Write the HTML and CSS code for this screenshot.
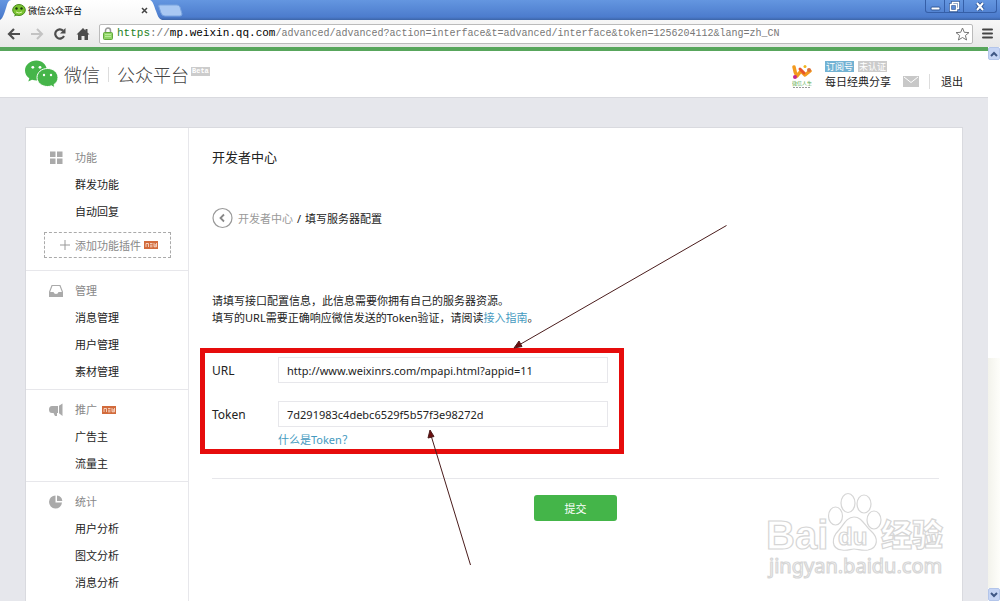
FILE: index.html
```html
<!DOCTYPE html>
<html lang="zh-CN">
<head>
<meta charset="utf-8">
<title>微信公众平台</title>
<link rel="stylesheet" href="styles.css">
</head>
<body>
<div class="tabbar">
  <svg class="tabshape" width="192" height="20" viewBox="0 0 192 20" aria-hidden="true">
    <defs><linearGradient id="tab" x1="0" y1="0" x2="0" y2="1"><stop offset="0" stop-color="#fff"/><stop offset="1" stop-color="#f7f7f7"/></linearGradient></defs>
    <path d="M0 20C3 18 4 14 6 8S8 1 11 0H150C153 1 154 6 156 11S158 18 162 20Z" fill="url(#tab)"/>
    <path d="M160 5H177Q179 5 180 7L182 14Q182 16 180 16H165Q162 16 161 13L159 7Q158 5 160 5Z" fill="#a9c8f3" stroke="#7ba4df"/>
  </svg>
  <div class="tab">
    <svg width="14" height="13" viewBox="0 0 14 13" aria-hidden="true"><path d="M3 10L2 12.500L6 11Z" fill="#4a9622"/><ellipse cx="7" cy="6" rx="6.300" ry="5.500" fill="#7bc331" stroke="#4b8d20"/><circle cx="4.500" cy="4.500" r="1.200" fill="#173c0b"/><circle cx="9.500" cy="4.500" r="1.200" fill="#173c0b"/><path d="M4 8Q7 10 10 8" fill="none" stroke="#dcf7aa"/></svg>
    <span class="tabtitle">微信公众平台</span>
    <button class="tabclose" aria-label="关闭标签"><svg width="7" height="7" viewBox="0 0 7 7"><path d="M1 1L6 6M6 1L1 6" stroke="#444" stroke-width="1.500"/></svg></button>
  </div>
  <div class="wincontrols">
    <button aria-label="最小化"><svg width="19" height="13" viewBox="0 0 19 13"><rect x="5" y="7" width="9" height="3" rx="1" fill="#fff" stroke="#315898"/></svg></button>
    <button aria-label="还原"><svg width="19" height="13" viewBox="0 0 19 13"><path d="M7.500 4V2.500H13.500V8.500H12M5.500 4.500H11.500V10.500H5.500Z" fill="none" stroke="#315898" stroke-width="3"/><path d="M7.500 4V2.500H13.500V8.500H12M5.500 4.500H11.500V10.500H5.500Z" fill="none" stroke="#fff" stroke-width="1.500"/></svg></button>
    <button class="winclose" aria-label="关闭"><svg width="19" height="13" viewBox="0 0 19 13"><path d="M6 3L12 10M12 3L6 10" stroke="#315898" stroke-width="4"/><path d="M6 3L12 10M12 3L6 10" stroke="#fff" stroke-width="2"/></svg></button>
  </div>
</div>
<div class="toolbar">
  <button aria-label="后退"><svg width="14" height="12" viewBox="0 0 14 12"><path d="M13 6H2M7 1L2 6L7 11" fill="none" stroke="#4d4d4d" stroke-width="2.200"/></svg></button>
  <button aria-label="前进"><svg width="14" height="12" viewBox="0 0 14 12"><path d="M1 6H12M7 1L12 6L7 11" fill="none" stroke="#c3c3c3" stroke-width="2"/></svg></button>
  <button aria-label="刷新"><svg width="14" height="12" viewBox="0 0 14 12"><path d="M11 8A4.600 4.600 0 1 1 10 2.600" fill="none" stroke="#4d4d4d" stroke-width="2.200"/><path d="M12.500 0V5.500H7Z" fill="#4d4d4d"/></svg></button>
  <button aria-label="主页"><svg width="14" height="12" viewBox="0 0 14 12"><path d="M7 0L0.500 6.500H2V12H5.500V8H8.500V12H12V6.500H13.500L11.500 4.500V1H9.500V2.500Z" fill="#4d4d4d"/></svg></button>
  <div class="address">
    <svg width="10" height="13" viewBox="0 0 10 13" aria-hidden="true"><path d="M2.500 6V3.500A2.500 2.500 0 0 1 7.500 3.500V6" fill="none" stroke="#999" stroke-width="1.500"/><rect x="0.500" y="5.500" width="9" height="7" rx="1" fill="#91d467" stroke="#62a93c"/><path d="M2 7.500H8M2 9.500H8" stroke="#b9ed98"/></svg>
    <span class="url"><span class="host"><span class="scheme">https</span><span class="sep">://</span>mp.weixin.qq.com</span>/advanced/advanced?action=interface&amp;t=advanced/interface&amp;token=1256204112&amp;lang=zh_CN</span>
    <button aria-label="收藏"><svg width="15" height="14" viewBox="0 0 15 14"><path d="M7.500 1L9.300 5.300L14 5.600L10.400 8.500L11.600 13L7.500 10.500L3.400 13L4.600 8.500L1 5.600L5.700 5.300Z" fill="#fff" stroke="#777"/></svg></button>
  </div>
  <button class="menubtn" aria-label="菜单"><svg width="11" height="11" viewBox="0 0 11 11"><path d="M1 1.500H10M1 5.500H10M1 9.500H10" stroke="#444" stroke-width="2" stroke-linecap="round"/></svg></button>
</div>
<div class="viewport">
  <div class="page">
    <header class="header">
      <svg width="33" height="28" viewBox="0 0 33 28" aria-hidden="true"><path d="M11.500 0.500C5 0.500 0 5 0 10.500C0 13.700 1.600 16.500 4.300 18.300L3.300 21.500L7 19.700Q9 20.400 12 20.400L22 10C21.400 4.500 17 0.500 11.500 0.500Z" fill="#45b549"/><path d="M22.500 8.500C16.500 8.500 12 12.500 12 17.500S16.500 26.500 22.500 26.500Q24.700 26.500 26.500 25.800L30 28L29 24.500C31.500 23 33 20.500 33 17.500C33 12.500 28.500 8.500 22.500 8.500Z" fill="#45b549" stroke="#fff"/><circle cx="7.800" cy="7.300" r="1.400" fill="#fff"/><circle cx="15" cy="7.300" r="1.400" fill="#fff"/><circle cx="19" cy="15" r="1.200" fill="#fff"/><circle cx="26" cy="15" r="1.200" fill="#fff"/></svg>
      <span class="brand">微信</span><span class="bar brandbar"></span><span class="brand">公众平台</span><span class="beta">Beta</span>
      <div class="account">
        <svg width="20" height="26" viewBox="0 0 20 26" aria-hidden="true"><path d="M2 3Q3 9 5 12L9 7L13 11L18 7" fill="none" stroke="#f39a1e" stroke-width="3.500" stroke-linecap="round" stroke-linejoin="round"/><path d="M8 5L12 9" stroke="#e8552b" stroke-width="3" stroke-linecap="round"/><circle cx="3" cy="13" r="2" fill="#c4278f"/><circle cx="13" cy="2.500" r="1.500" fill="#f0b51d"/><circle cx="17" cy="6" r="2" fill="#d9703c"/><text x="0" y="21" class="avatartext">微信人生</text><path d="M1 23.500H18" stroke="#999" stroke-dasharray="2 1"/></svg>
        <div class="who"><div class="tags"><span class="tag tagblue">订阅号</span><span class="tag">未认证</span></div><a href="#">每日经典分享</a></div>
        <a href="#" class="mail" aria-label="消息"><svg width="16" height="11" viewBox="0 0 16 11"><rect width="16" height="11" fill="#c8c8c8"/><path d="M1 1L8 6.500L15 1" fill="none" stroke="#fff"/></svg></a>
        <span class="bar"></span>
        <a href="#" class="logout">退出</a>
      </div>
    </header>
    <div class="panel">
      <nav class="side">
        <section class="group first">
          <h2><svg width="14" height="14" viewBox="0 0 14 14"><path d="M1 0.500H6.500V6H1ZM8 0.500H13.500V6H8ZM1 7.500H6.500V13H1ZM8 7.500H13.500V13H8Z" fill="#aaa"/></svg>功能</h2>
          <ul><li><a href="#">群发功能</a></li><li><a href="#">自动回复</a></li></ul>
          <button class="plugin"><svg width="10" height="10" viewBox="0 0 10 10"><path d="M5 0V10M0 5H10" stroke="#999"/></svg>添加功能插件<svg width="14" height="8" viewBox="0 0 14 8" class="new"><rect width="14" height="8" fill="#d26b3c"/><path d="M2 6V2.500H4.500V6M6 2.500H8.500M6 4.200H8.500M6 5.800H8.500M10 2V5.800H12.500V2M11.200 3V5.500" fill="none" stroke="#fce7da" stroke-width="0.800"/></svg></button>
        </section>
        <section class="group">
          <h2><svg width="14" height="14" viewBox="0 0 14 14"><path d="M3 1.500H11L13.500 8V12.500H0.500V8Z" fill="none" stroke="#aaa" stroke-width="1.200"/><path d="M0.500 8H4.500Q5 10 7 10T9.500 8H13.500V12.500H0.500Z" fill="#aaa"/></svg>管理</h2>
          <ul><li><a href="#">消息管理</a></li><li><a href="#">用户管理</a></li><li><a href="#">素材管理</a></li></ul>
        </section>
        <section class="group">
          <h2><svg width="14" height="14" viewBox="0 0 14 14"><path d="M3 3H9V10H8V13H6L4.500 10H3A3 3.500 0 0 1 3 3ZM10 2.800L13.500 0.500V13L10 10.300Z" fill="#aaa"/></svg>推广<svg width="14" height="8" viewBox="0 0 14 8" class="new"><rect width="14" height="8" fill="#d26b3c"/><path d="M2 6V2.500H4.500V6M6 2.500H8.500M6 4.200H8.500M6 5.800H8.500M10 2V5.800H12.500V2M11.200 3V5.500" fill="none" stroke="#fce7da" stroke-width="0.800"/></svg></h2>
          <ul><li><a href="#">广告主</a></li><li><a href="#">流量主</a></li></ul>
        </section>
        <section class="group">
          <h2><svg width="14" height="14" viewBox="0 0 14 14"><path d="M6.500 0.500A6.500 6.500 0 1 0 13 7.500H6.500Z" fill="#aaa"/><path d="M8 0.500A6 6 0 0 1 13.300 6H8Z" fill="#aaa"/></svg>统计</h2>
          <ul><li><a href="#">用户分析</a></li><li><a href="#">图文分析</a></li><li><a href="#">消息分析</a></li></ul>
        </section>
      </nav>
      <main class="main">
        <h1>开发者中心</h1>
        <div class="crumbs"><a href="#" aria-label="返回"><svg width="22" height="22" viewBox="0 0 22 22"><circle cx="10.500" cy="11" r="9.500" fill="none" stroke="#999" stroke-width="1.200"/><path d="M12 7.500L8.500 11L12 14.500" fill="none" stroke="#888" stroke-width="1.800"/></svg></a><a href="#" class="muted">开发者中心</a><span>/</span><span>填写服务器配置</span></div>
        <p>请填写接口配置信息，此信息需要你拥有自己的服务器资源。<br>填写的URL需要正确响应微信发送的Token验证，请阅读<a href="#" class="link">接入指南</a>。</p>
        <form>
          <div class="fields">
            <label for="url">URL</label><input id="url" type="text" value="http://www.weixinrs.com/mpapi.html?appid=11">
            <label for="token">Token</label><input id="token" type="text" value="7d291983c4debc6529f5b57f3e98272d">
            <a href="#" class="link hint">什么是Token？</a>
          </div>
          <div class="actions"><button type="button" class="submit">提交</button></div>
        </form>
      </main>
    </div>
  </div>
  <div class="scrollbar">
    <button aria-label="向上滚动"><svg width="8" height="6" viewBox="0 0 8 6"><path d="M1 5L4 2L7 5" fill="none" stroke="#3f5785" stroke-width="2"/></svg></button>
    <div class="thumb"></div><div class="track"></div>
    <button aria-label="向下滚动"><svg width="8" height="6" viewBox="0 0 8 6"><path d="M1 1L4 4L7 1" fill="none" stroke="#3f5785" stroke-width="2"/></svg></button>
  </div>
</div>
<svg class="overlay arrows" width="300" height="360" viewBox="430 215 300 360" aria-hidden="true"><g stroke="#4a1c1c" fill="#6b0f0f"><path d="M726.500 225.500L519 345M470.500 565L431.500 437" fill="none"/><path d="M514 348L519 341L522 346.500Z"/><path d="M430 430L428 438L434 436.500Z"/></g></svg>
<svg class="overlay watermark" width="190" height="95" viewBox="762 488 190 95" aria-hidden="true">
  <g fill="#fff" stroke="#d6d6d6" stroke-width="1.200">
    <text x="766" y="549" class="wm-big">Bai</text>
    <ellipse cx="835.500" cy="516" rx="7" ry="9"/><ellipse cx="848" cy="503" rx="7" ry="9.500"/><ellipse cx="864" cy="504" rx="7" ry="9"/><ellipse cx="874" cy="520" rx="7" ry="9"/>
    <path d="M854 517C847 517 844 524 839 530C831 538 831 549 842 550C848 551 850 549 854 549S862 551 868 550C878 548 879 538 871 531C864 525 862 517 854 517Z"/>
    <text x="838" y="545" class="wm-du">du</text>
    <text x="881" y="546" class="wm-cn">经验</text>
    <text x="769" y="573" class="wm-url">jingyan.baidu.com</text>
  </g>
</svg>
</body>
</html>
```
FILE: styles.css
```css
* { box-sizing: border-box; }
body {
  margin: 0;
  height: 100vh;
  overflow: hidden;
  position: relative;
  display: flex;
  flex-direction: column;
  font: 11px/17px "Noto Sans", "Noto Sans CJK SC", sans-serif;
  color: #222;
}
button { font: inherit; border: 0; padding: 0; background: none; display: flex; align-items: center; justify-content: center; }
svg { display: block; flex: none; }
a { color: inherit; text-decoration: none; }
h1, h2, p, ul { margin: 0; padding: 0; font-weight: 400; }
ul { list-style: none; }

.tabbar { position: relative; flex: none; height: 20px; display: flex; justify-content: space-between; background: linear-gradient(#6496e0, #4c7ccd 85%, #3d65a8); }
.tabshape { position: absolute; left: 0; top: 0; }
.tab { position: relative; width: 150px; padding-left: 12px; display: flex; align-items: center; gap: 2px; font-family: "Noto Sans CJK SC", sans-serif; font-size: 9px; color: #000; }
.tabtitle { flex: 1; }
.tabclose { width: 11px; height: 11px; }
.wincontrols { display: flex; height: 13px; margin-right: 3px; border: 1px solid #355fa8; border-top: 0; border-radius: 0 0 3px 3px; }
.wincontrols button { width: 19px; border-right: 1px solid #355fa8; }
.wincontrols .winclose { width: 32px; border-right: 0; }

.toolbar { flex: none; height: 27px; padding: 0 7px; display: flex; align-items: center; gap: 9px; background: linear-gradient(#f7f7f7, #e8e8e8); }
.address { flex: 1; min-width: 0; height: 20px; padding: 0 2px 0 3px; display: flex; align-items: center; gap: 4px; background: #fff; border: 1px solid #bbb; border-radius: 2px; }
.url { flex: 1; white-space: nowrap; overflow: hidden; font-family: "Liberation Mono", monospace; font-size: 10px; color: #777; }
.host { font-size: 11px; color: #000; }
.scheme { color: #258225; }
.sep { color: #777; }

.viewport { flex: 1; min-height: 0; display: flex; overflow: hidden; }
.page { flex: 1; min-width: 0; background: #e6e7ec; border-top: 4px solid #58a65c; }
.header { height: 47px; padding: 0 25px; display: flex; align-items: center; background: #fff; border-bottom: 1px solid #d9dadf; }
.brand { font-family: "Noto Sans CJK SC", sans-serif; font-weight: 300; font-size: 18px; line-height: 24px; color: #444; }
.header > svg { margin-right: 6px; }
.bar { width: 1px; height: 15px; background: #ddd; }
.brandbar { margin: 0 8px; }
.beta { margin: 0 0 6px 2px; padding: 0 1px; font: bold 7px/9px "Liberation Mono", monospace; color: #fff; background: #ccc; }
.account { margin-left: auto; padding-top: 2px; display: flex; align-items: flex-end; }
.avatartext { font: 5px "Noto Sans CJK SC", sans-serif; fill: #55a845; }
.who { margin-left: 13px; }
.tags { display: flex; gap: 4px; margin-bottom: 1px; }
.tag { padding: 0 1px; font-size: 9px; line-height: 11px; color: #fff; background: #ccc; }
.tagblue { background: #72b2d3; }
.mail { margin: 0 10px 3px 12px; }
.account .bar { margin-bottom: 1px; }
.logout { margin-left: 11px; }

.panel { min-height: 600px; margin: 29px 25px 0 25px; display: flex; background: #fff; border: 1px solid #d9dadf; }
.side { flex: none; width: 163px; border-right: 1px solid #e7e7eb; }
.group { padding: 7px 0 4px; border-bottom: 1px solid #e7e7eb; }
.group:last-child { border-bottom: 0; }
.group h2 { padding-left: 23px; display: flex; align-items: center; font-size: 11px; line-height: 26px; color: #888; }
.group h2 svg:first-child { margin-right: 12px; }
.group h2 .new { margin-left: 5px; }
.group li { padding-left: 49px; line-height: 27px; }
.first { padding: 17px 0 12px; }
.plugin { width: 127px; height: 26px; margin: 7px 0 0 18px; padding-left: 3px; gap: 5px; border: 1px dashed #aaa; color: #888; }
.plugin .new { margin-left: -2px; }

.main { flex: 1; min-width: 0; padding: 19px 23px; }
h1 { font-size: 13px; line-height: 20px; }
.crumbs { margin-top: 40px; display: flex; align-items: center; gap: 4px; }
.muted { color: #999; }
p { margin-top: 63px; }
.link { color: #459ac0; }
.fields {
  width: 424px;
  max-width: 100%;
  margin: 22px 0 0 -12px;
  padding: 4px 11px 1px 7px;
  display: grid;
  grid-template-columns: 66px 1fr;
  row-gap: 18px;
  align-items: center;
  border: 5px solid #e60c0c;
}
.fields label { font-size: 12px; }
.fields input { width: 100%; height: 26px; padding: 0 8px; border: 1px solid #e7e7eb; font: inherit; color: #222; }
.hint { grid-column: 2; margin-top: -14px; }
.actions { margin-top: 24px; padding-top: 16px; display: flex; justify-content: center; border-top: 1px solid #e7e7eb; }
.submit { width: 83px; height: 26px; border-radius: 3px; background: #44b549; color: #fff; }

.scrollbar { flex: none; width: 12px; display: flex; flex-direction: column; background: #fff; }
.scrollbar button { height: 13px; background: #c6d5f5; border: 1px solid #b3c5ea; border-radius: 2px; }
.thumb { flex: 298; }
.track { flex: 230; background: linear-gradient(90deg, #f3f3ec, #fefefa); }

.overlay { position: absolute; pointer-events: none; }
.arrows { left: 430px; top: 215px; overflow: visible; }
.watermark { left: 762px; top: 488px; }
.wm-big { font: bold 40px "Liberation Sans", sans-serif; }
.wm-du { font: bold 24px "Liberation Sans", sans-serif; }
.wm-cn { font: 900 31px "Noto Sans CJK SC", sans-serif; }
.wm-url { font: 20px "Noto Sans", sans-serif; }
```
